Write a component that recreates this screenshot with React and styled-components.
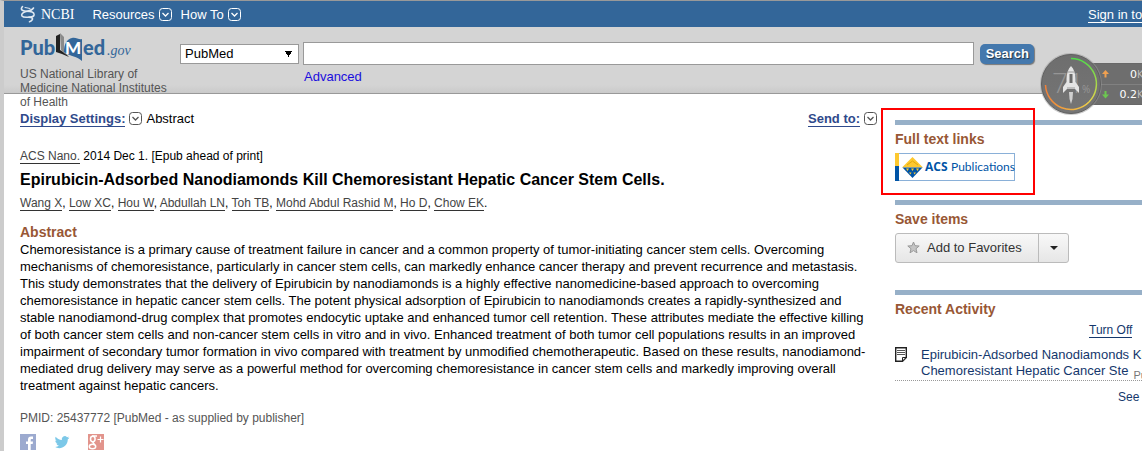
import React from "react"
import styled, { createGlobalStyle } from "styled-components"

const authors = ["Wang X", "Low XC", "Hou W", "Abdullah LN", "Toh TB", "Mohd Abdul Rashid M", "Ho D", "Chow EK"]

const abstractText =
    "Chemoresistance is a primary cause of treatment failure in cancer and a common property of tumor-initiating cancer stem cells. Overcoming mechanisms of chemoresistance, particularly in cancer stem cells, can markedly enhance cancer therapy and prevent recurrence and metastasis. This study demonstrates that the delivery of Epirubicin by nanodiamonds is a highly effective nanomedicine-based approach to overcoming chemoresistance in hepatic cancer stem cells. The potent physical adsorption of Epirubicin to nanodiamonds creates a rapidly-synthesized and stable nanodiamond-drug complex that promotes endocytic uptake and enhanced tumor cell retention. These attributes mediate the effective killing of both cancer stem cells and non-cancer stem cells in vitro and in vivo. Enhanced treatment of both tumor cell populations results in an improved impairment of secondary tumor formation in vivo compared with treatment by unmodified chemotherapeutic. Based on these results, nanodiamond-mediated drug delivery may serve as a powerful method for overcoming chemoresistance in cancer stem cells and markedly improving overall treatment against hepatic cancers."

const Toggle = ({ stroke }) => (
    <svg width="13" height="13" viewBox="0 0 13 13" fill="none" stroke={stroke} aria-hidden="true">
        <rect x="0.5" y="0.5" width="12" height="12" rx="3" />
        <path d="M3.5 5 6.5 8 9.5 5" strokeWidth="1.3" />
    </svg>
)

const NcbiMark = () => (
    <svg width="16" height="18" viewBox="0 0 16 18" fill="none" stroke="#dfe8f1" strokeLinecap="round" aria-hidden="true">
        <path d="M2.500 1.500C0 4.500 2 6 6 6.200 11 6.500 14.500 7 14 10 13.500 12.500 10 12 9 12" strokeWidth="1.600" />
        <path d="M13.500 3C12 5.500 9 6 6 6.500 2.500 7.500 1 9.500 2 11 4 13.500 8 11.500 11 12.500 14 13.500 12 16 9.500 16.800" strokeWidth="1.600" />
        <path d="M5 2.500 10 3.500" strokeWidth="1" />
    </svg>
)

const PubMedLogo = () => (
    <svg width="112" height="32" viewBox="0 0 112 32" role="img" aria-label="PubMed.gov">
        <g fontFamily="Lato, sans-serif" fontWeight="900" fill="#336699">
            <text x="0" y="23" fontSize="20">Pub</text>
            <text x="63" y="23" fontSize="20">ed</text>
        </g>
        <path d="M36 4 40 2V18L45 21 49 25 42 22 36 20Z" fill="#222" />
        <path d="M40 1 44 5V20L46 23 41 18Z" fill="#8a8a8a" />
        <path d="M44 20C44 12 47 7 52 6 56 5 59 8 62 7V29C57 24 51 25 44 20Z" fill="#336699" />
        <text x="45" y="22" fontSize="17" fontWeight="900" fill="#fff" fontFamily="Lato, sans-serif">M</text>
        <text x="87" y="23" fontSize="14" fontStyle="italic" fill="#336699" fontFamily="Liberation Serif, serif">.gov</text>
    </svg>
)

const AcsLogo = () => (
    <svg width="120" height="28" viewBox="0 0 120 28" role="img" aria-label="ACS Publications">
        <rect x="0.5" y="0.5" width="119" height="27" fill="#fff" stroke="#8ab0d8" />
        <path d="M0 0H4V13H0Z" fill="#fdc82f" />
        <path d="M0 13H4V28H0Z" fill="#0054a6" />
        <path d="M17.500 4 28 14.500H7Z" fill="#fdc82f" />
        <path d="M7.500 14.500H27.500L17.500 25Z" fill="#0054a6" />
        <path d="M11 15.500H14L12.500 18ZM16 15.500H19L17.500 18ZM21 15.500H24L22.500 18ZM14 19.500H16.500L15.500 21.500ZM18.500 19.500H21L19.500 21.500Z" fill="#fdc82f" />
        <path d="M12 12 17.500 8 23 12" stroke="#e3a90c" fill="none" />
        <g fontSize="12" fill="#0054a6">
            <text x="30" y="18" fontWeight="700" fontFamily="Open Sans, sans-serif">ACS</text>
            <text x="56" y="18" fontFamily="Lato, sans-serif">Publications</text>
        </g>
    </svg>
)

const Star = () => (
    <svg width="13" height="13" viewBox="0 0 13 13" aria-hidden="true">
        <path d="M6.500 1 8 4.700 12.200 5 9 7.700 10 11.800 6.500 9.600 3 11.800 4 7.700 0.800 5 5 4.700Z" fill="#c4c4c4" stroke="#999" />
    </svg>
)

const Note = () => (
    <svg width="12" height="15" viewBox="0 0 12 15" fill="none" stroke="#222" aria-hidden="true">
        <path d="M0.700 0.700H11.300V10.500L7.500 14.300H0.700Z" strokeWidth="1.400" />
        <path d="M2 3.500H10M2 5.500H10M2 7.500H10" stroke="#555" />
        <path d="M7.500 14V10.500H11Z" fill="#fff" />
    </svg>
)

const Facebook = () => (
    <svg width="16" height="16" viewBox="0 0 16 16" aria-hidden="true">
        <path d="M0 0H16V16H0Z" fill="#9caacf" />
        <path d="M8 16V10H6V7.500H8V5.500C8 3.500 9 2.500 11 2.500H13V5H11.700C11 5 10.700 5.300 10.700 6V7.500H13L12.700 10H10.700V16Z" fill="#fff" />
    </svg>
)

const Twitter = () => (
    <svg width="16" height="16" viewBox="0 0 24 24" fill="#7cc8e8" aria-hidden="true">
        <path d="M23 5.500c-.8.400-1.700.6-2.600.7.900-.6 1.600-1.400 2-2.500-.9.500-1.900.9-2.900 1.100A4.500 4.500 0 0 0 11.800 9C8 8.800 4.700 7 2.500 4.200c-1.200 2-.6 4.700 1.400 6.100-.7 0-1.400-.2-2-.6 0 2.200 1.500 4 3.600 4.500-.6.200-1.300.2-2 .1.600 1.800 2.200 3.100 4.200 3.100A9 9 0 0 1 1 19.300C8.500 24 20.700 20 20.700 8c1-.7 1.700-1.500 2.300-2.500z" />
    </svg>
)

const GooglePlus = () => (
    <svg width="16" height="16" viewBox="0 0 16 16" aria-hidden="true">
        <path d="M0 0H16V16H0Z" fill="#e2948c" />
        <g fill="none" stroke="#fff" strokeWidth="1.500">
            <ellipse cx="4.800" cy="5" rx="2.300" ry="2.700" />
            <path d="M4 2H9M5.500 7.500C4.500 8.500 5 9 6.500 10" />
            <ellipse cx="4.500" cy="12.500" rx="3.200" ry="2.300" />
            <path d="M9.500 5.500H15.500M12.500 2.500V8.500" strokeWidth="1.200" />
        </g>
    </svg>
)

const RocketGauge = () => (
    <svg width="64" height="64" viewBox="0 0 64 64" aria-hidden="true">
        <defs>
            <linearGradient id="green" x1="0" y1="0" x2="0" y2="1">
                <stop offset="0" stopColor="#4fdc4a" />
                <stop offset="1" stopColor="#e8d64a" />
            </linearGradient>
            <linearGradient id="orange" x1="0" y1="0" x2="1" y2="0">
                <stop offset="0" stopColor="#f08038" />
                <stop offset="1" stopColor="#f0d048" />
            </linearGradient>
            <linearGradient id="disc" x1="0" y1="0" x2="0" y2="1">
                <stop offset="0" stopColor="#6e6e6e" />
                <stop offset="1" stopColor="#757575" />
            </linearGradient>
        </defs>
        <circle cx="32" cy="32" r="31" fill="#999" opacity="0.5" />
        <circle cx="32" cy="32" r="29.500" fill="url(#disc)" stroke="#606060" />
        <text x="13" y="41" fontSize="28" fill="#959595" fontFamily="Open Sans, sans-serif" fontWeight="300">71</text>
        <text x="43" y="41" fontSize="10" fill="#969696" fontFamily="Open Sans, sans-serif">%</text>
        <path d="M32 6.500A25.500 25.500 0 0 1 50 50" fill="none" stroke="url(#green)" strokeWidth="1.500" />
        <path d="M50 50A25.500 25.500 0 0 1 6.500 33" fill="none" stroke="url(#orange)" strokeWidth="1.500" />
        <path d="M32 14C35 17 36.500 22 36.500 27V30L40 35V41L36 37H28L24 41V35L27.500 30V27C27.500 22 29 17 32 14Z" fill="#e4e4e4" />
        <path d="M30.500 22H33.500V31H30.500Z" fill="#6b6b6b" />
        <path d="M28.500 20H35.500M28 36H36" stroke="#9a9a9a" />
        <path d="M30 40H34L33.500 47 32 52 30.500 47Z" fill="#cfcfcf" />
    </svg>
)

const Arrow = ({ color, down }) => (
    <svg width="7" height="8" viewBox="0 0 7 8" aria-hidden="true">
        <path d={down ? "M2.500 0H4.500V3.500H7L3.500 7.500 0 3.500H2.500Z" : "M3.500 0 7 4H4.500V7.500H2.500V4H0Z"} fill={color} />
    </svg>
)

export default function App() {
    return (
        <Page>
            <GlobalStyle />
            <TopBar>
                <Brand href="#ncbi"><NcbiMark />NCBI</Brand>
                <MenuButton type="button">Resources <Toggle stroke="#fff" /></MenuButton>
                <MenuButton type="button">How To <Toggle stroke="#fff" /></MenuButton>
                <SignIn href="#signin">Sign in to NCBI</SignIn>
            </TopBar>

            <Header>
                <LogoBlock>
                    <PubMedLogo />
                    <Tagline>US National Library of Medicine National Institutes of Health</Tagline>
                </LogoBlock>
                <SearchForm onSubmit={(e) => e.preventDefault()}>
                    <SearchRow>
                        <Database aria-label="Database" defaultValue="PubMed">
                            <option>PubMed</option>
                        </Database>
                        <SearchInput type="text" aria-label="Search term" />
                        <SearchButton type="submit">Search</SearchButton>
                    </SearchRow>
                    <Advanced href="#advanced">Advanced</Advanced>
                </SearchForm>
            </Header>

            <Body>
                <Main>
                    <Settings>
                        <SettingLink href="#display">Display Settings:</SettingLink>
                        <Toggle stroke="#555" />
                        <span>Abstract</span>
                        <SendTo>
                            <SettingLink href="#send">Send to:</SettingLink>
                            <Toggle stroke="#555" />
                        </SendTo>
                    </Settings>
                    <Citation><TextLink href="#journal">ACS Nano.</TextLink> 2014 Dec 1. [Epub ahead of print]</Citation>
                    <Title>Epirubicin-Adsorbed Nanodiamonds Kill Chemoresistant Hepatic Cancer Stem Cells.</Title>
                    <Authors>
                        {authors.map((name, index) => (
                            <React.Fragment key={name}>
                                <TextLink href="#author">{name}</TextLink>
                                {index < authors.length - 1 ? ", " : "."}
                            </React.Fragment>
                        ))}
                    </Authors>
                    <Heading>Abstract</Heading>
                    <Abstract>{abstractText}</Abstract>
                    <Pmid>PMID: 25437772 [PubMed - as supplied by publisher]</Pmid>
                    <Socials>
                        <a href="#facebook" aria-label="Facebook"><Facebook /></a>
                        <a href="#twitter" aria-label="Twitter"><Twitter /></a>
                        <a href="#google" aria-label="Google+"><GooglePlus /></a>
                    </Socials>
                </Main>

                <Side>
                    <Section $space="19px">
                        <Highlight />
                        <Heading>Full text links</Heading>
                        <Publisher href="#acs"><AcsLogo /></Publisher>
                    </Section>
                    <Section $space="27px">
                        <Heading>Save items</Heading>
                        <Favorites>
                            <FavoriteButton type="button"><Star />Add to Favorites</FavoriteButton>
                            <FavoriteMenu type="button" aria-label="More favorites options"><Caret /></FavoriteMenu>
                        </Favorites>
                    </Section>
                    <Section $space="0">
                        <Heading>Recent Activity</Heading>
                        <TurnOff><SideLink href="#off" $underlined>Turn Off</SideLink></TurnOff>
                        <Activity>
                            <Note />
                            <div>
                                <SideLink href="#article">Epirubicin-Adsorbed Nanodiamonds Kill<br />Chemoresistant Hepatic Cancer Ste</SideLink>
                                <Source>PubMed</Source>
                            </div>
                        </Activity>
                        <SeeMore><SideLink href="#more">See more...</SideLink></SeeMore>
                    </Section>
                </Side>
            </Body>

            <Monitor>
                <RocketGauge />
                <Speeds>
                    <Speed><Arrow color="#f0a050" /><Amount>0</Amount><Unit>K/s</Unit></Speed>
                    <Speed><Arrow color="#6cc850" down /><Amount>0.2</Amount><Unit>K/s</Unit></Speed>
                </Speeds>
            </Monitor>
        </Page>
    )
}

const GlobalStyle = createGlobalStyle`
    * { box-sizing: border-box; }
    body {
        margin: 0;
        background: #fff;
        font-family: "Liberation Sans", Arial, sans-serif;
        font-size: 13px;
        line-height: 17px;
    }
    button, input, select { font: inherit; }
    svg { display: block; flex: none; }
`
const Page = styled.div`
    position: relative;
    min-height: 100vh;
    border-left: 4px solid #ccc;
    border-top: 1px solid #999;
    overflow: hidden;
`
const TopBar = styled.div`
    display: flex;
    align-items: center;
    height: 26px;
    padding-left: 16px;
    background: #336699;
    white-space: nowrap;
`
const Brand = styled.a`
    display: flex;
    align-items: center;
    gap: 5px;
    margin-right: 18px;
    color: #fff;
    font-family: "Liberation Serif", "Times New Roman", serif;
    font-size: 14px;
    text-decoration: none;
`
const MenuButton = styled.button`
    display: flex;
    align-items: center;
    gap: 4px;
    margin-right: 9px;
    padding: 0;
    border: 0;
    background: none;
    color: #fff;
`
const SignIn = styled.a`
    flex: none;
    width: 54px;
    margin-left: auto;
    color: #fff;
    text-underline-offset: 3px;
`
const Header = styled.header`
    display: flex;
    height: 67px;
    padding: 0 108px 0 16px;
    background: linear-gradient(#d4d4d4 58px, #cacaca 66px, #999 66px);
`
const LogoBlock = styled.div`
    flex: none;
    width: 160px;
    padding-top: 5px;
`
const Tagline = styled.div`
    width: 154px;
    padding-top: 3px;
    color: #555;
    font-size: 12px;
    line-height: 14px;
`
const SearchForm = styled.form`
    flex: 1;
    min-width: 0;
    padding-top: 15px;
`
const SearchRow = styled.div`
    display: flex;
    align-items: center;
`
const Database = styled.select`
    width: 119px;
    height: 20px;
    margin-right: 4px;
    padding: 0 16px 0 4px;
    appearance: none;
    border: 1px solid #999;
    border-radius: 0;
    background: conic-gradient(from -30deg at 50% 100%, #000 60deg, #0000 0) right 6px center / 7px 6px no-repeat, #fff;
    color: #000;
    line-height: 18px;
`
const SearchInput = styled.input`
    flex: 1;
    min-width: 0;
    height: 23px;
    padding: 0 4px;
    border: 1px solid #999;
    background: #fff;
`
const SearchButton = styled.button`
    height: 20px;
    margin-left: 6px;
    padding: 0 5px 0 6px;
    border: 0;
    border-radius: 5px;
    background: #4478ad;
    box-shadow: 1px 1px 1px #777;
    color: #fff;
    font-weight: bold;
    text-shadow: 1px 1px 1px #234;
`
const Advanced = styled.a`
    display: inline-block;
    margin: 3px 0 0 124px;
    color: #1a0dde;
    text-decoration: none;
`
const Body = styled.div`
    display: grid;
    grid-template-columns: minmax(0, 1fr) 247px;
    column-gap: 18px;
    padding-left: 16px;
`
const Main = styled.main`
    padding-top: 16px;
`
const Settings = styled.div`
    display: flex;
    align-items: center;
    gap: 4px;
    margin-bottom: 21px;
`
const SettingLink = styled.a`
    border-bottom: 1px solid #2f4a8b;
    color: #2f4a8b;
    font-weight: bold;
    line-height: 15px;
    text-decoration: none;
`
const SendTo = styled.div`
    display: flex;
    align-items: center;
    gap: 4px;
    margin-left: auto;
`
const Citation = styled.p`
    margin: 0;
    font-size: 12px;
`
const TextLink = styled.a`
    border-bottom: 1px solid #333;
    color: #444;
    text-decoration: none;
`
const Title = styled.h1`
    margin: 5px 0 5px;
    font-size: 16px;
    line-height: 20px;
`
const Authors = styled.p`
    margin: 0 0 12px;
    font-size: 12px;
`
const Heading = styled.h3`
    margin: 0;
    color: #985735;
    font-size: 14px;
    line-height: 17px;
`
const Abstract = styled.p`
    margin: 0 0 16px;
`
const Pmid = styled.p`
    margin: 0 0 7px;
    color: #555;
    font-size: 12px;
`
const Socials = styled.div`
    display: flex;
    gap: 18px;
`
const Side = styled.aside`
    padding-top: 26px;
    white-space: nowrap;
`
const Section = styled.section`
    position: relative;
    margin-bottom: ${(props) => props.$space};
    padding-top: 6px;
    border-top: 5px solid #97b0c8;
`
const Highlight = styled.div`
    position: absolute;
    top: -17px;
    left: -14px;
    width: 154px;
    height: 87px;
    border: 2px solid #f00;
    pointer-events: none;
`
const Publisher = styled.a`
    display: block;
    width: max-content;
    margin-top: 5px;
`
const Favorites = styled.div`
    display: flex;
    width: max-content;
    height: 30px;
    margin-top: 5px;
    border: 1px solid #bbb;
    border-radius: 3px;
    background: linear-gradient(#f8f8f8, #e6e6e6);
`
const FavoriteButton = styled.button`
    display: flex;
    align-items: center;
    gap: 7px;
    padding: 0 16px 2px 11px;
    border: 0;
    background: none;
    color: #333;
`
const FavoriteMenu = styled.button`
    width: 30px;
    padding: 0 11px;
    border: 0;
    border-left: 1px solid #bbb;
    background: none;
`
const Caret = styled.span`
    display: block;
    border: 4px solid transparent;
    border-top-color: #222;
    border-bottom: 0;
`
const TurnOff = styled.div`
    margin: 4px 0 8px;
    padding-left: 194px;
    font-size: 12px;
`
const SideLink = styled.a`
    border-bottom: ${(props) => (props.$underlined ? "1px solid #14376c" : "0")};
    color: #14376c;
    text-decoration: none;
`
const Activity = styled.div`
    display: flex;
    gap: 14px;
    padding-bottom: 1px;
    border-bottom: 1px dotted #999;
    line-height: 16px;
`
const Source = styled.sub`
    margin-left: 5px;
    color: #777;
    font-size: 11px;
    line-height: 0;
`
const SeeMore = styled.div`
    margin-top: 8px;
    padding-left: 223px;
    font-size: 12px;
`
/* floating network meter, sits over the header */
const Monitor = styled.div`
    position: absolute;
    top: 51px;
    right: 0;
    display: flex;
    align-items: center;
    width: 103px;
    color: #fff;
    isolation: isolate;
`
const Speeds = styled.div`
    position: relative;
    z-index: -1;
    flex: none;
    width: 80px;
    margin-left: -14px;
    border: 1px solid #686868;
    background: #6e6e6e;
`
const Speed = styled.div`
    display: flex;
    align-items: center;
    height: 20px;
    padding-left: 12px;
    font-family: "DejaVu Sans", sans-serif;
    font-size: 11px;
    white-space: nowrap;

    & + & {
        border-top: 1px solid #818181;
    }
`
const Amount = styled.span`
    width: 28px;
    text-align: right;
`
const Unit = styled.span`
    color: #bbb;
    font-size: 10px;
`
